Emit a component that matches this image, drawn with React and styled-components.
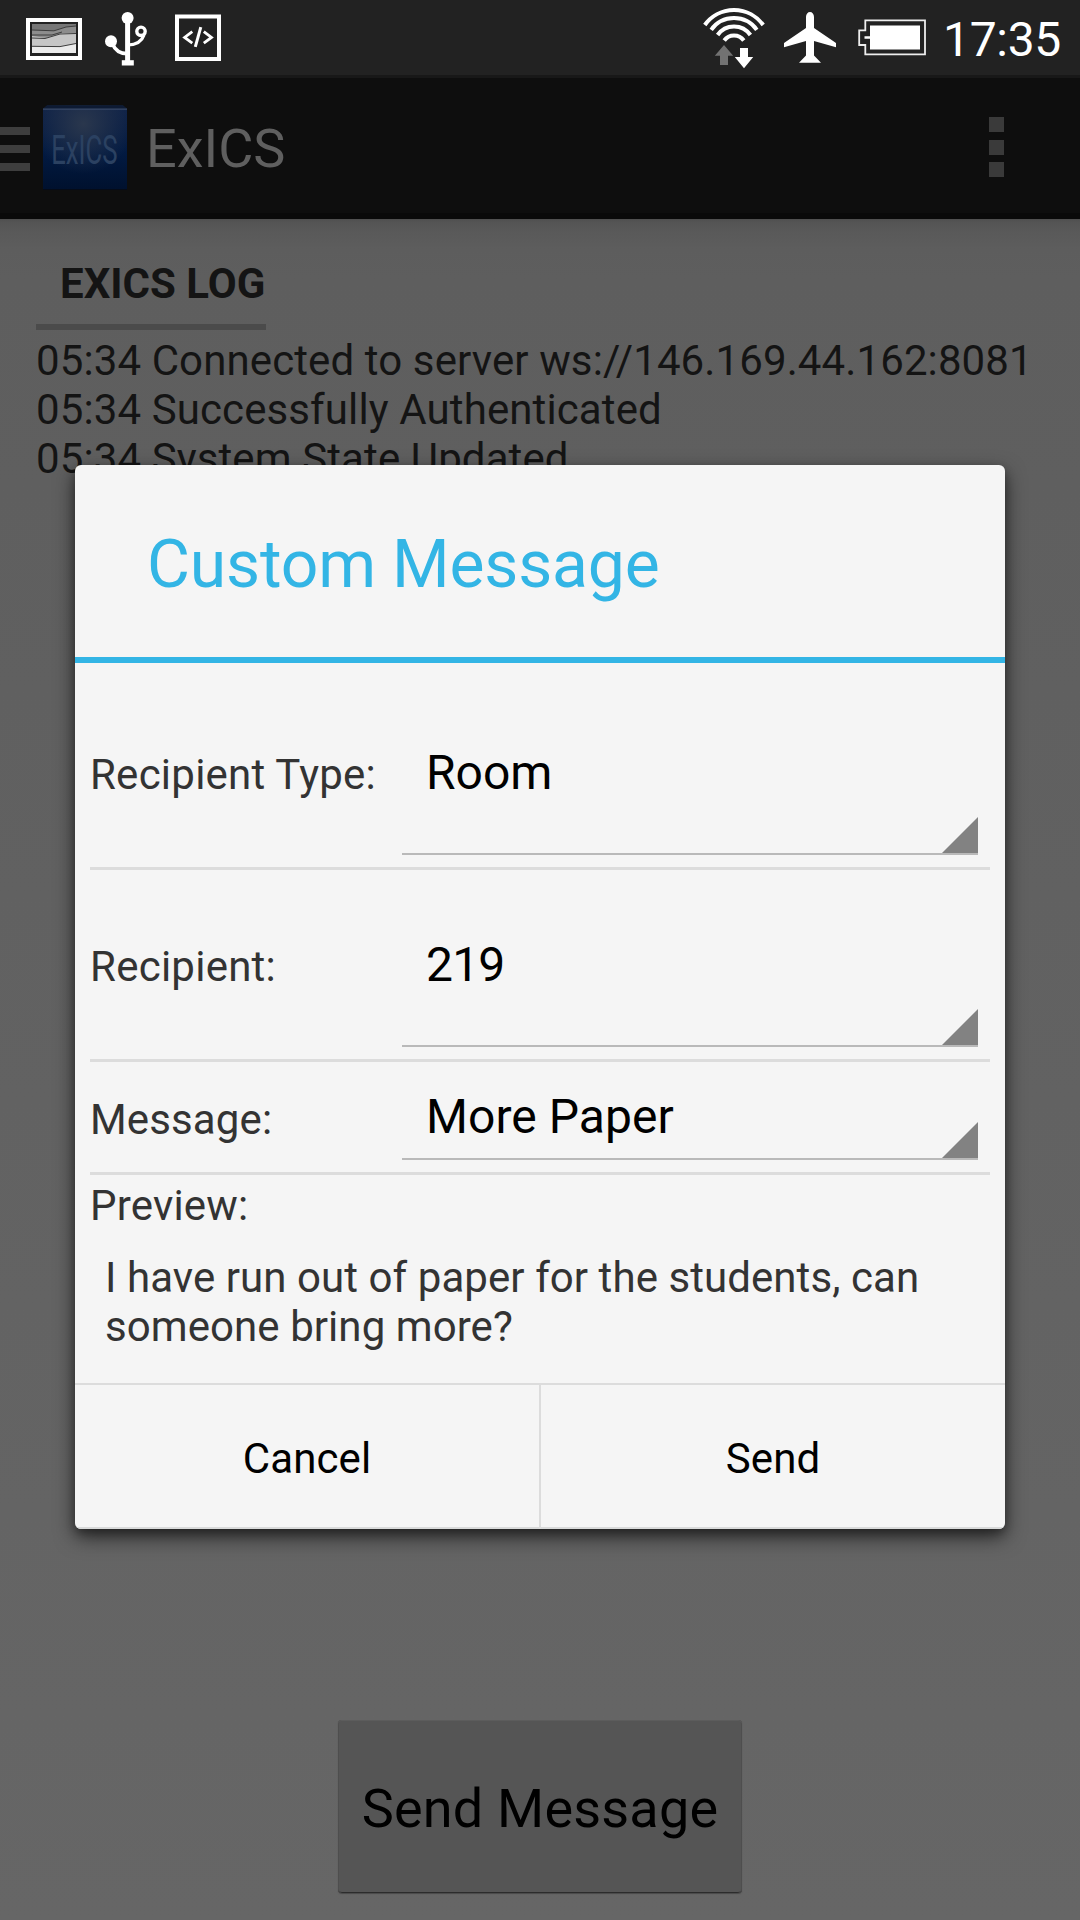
import React from "react";
import styled, { createGlobalStyle } from "styled-components";

const GlobalStyle = createGlobalStyle`
  * { box-sizing: border-box; }
  body { margin: 0; background: #636363; }
  button { border: 0; padding: 0; margin: 0; background: none; font: inherit; color: inherit; }
`;

const Screen = styled.div`
  position: relative;
  display: flex;
  flex-direction: column;
  width: 1080px;
  height: 1920px;
  overflow: hidden;
  font-family: Roboto, "Noto Sans", sans-serif;
  font-size: 42px;
  line-height: 49px;
  white-space: nowrap;
`;

/* ---------- status bar ---------- */

const StatusBar = styled.header`
  flex: none;
  display: flex;
  justify-content: space-between;
  height: 78px;
  padding: 0 18px 0 26px;
  background: #222;
  border-bottom: 3px solid #181818;
`;

const StatusGroup = styled.div`
  display: flex;
`;

const StatusIcon = styled.svg`
  display: block;
  flex: none;
  width: ${(p) => p.$width}px;
  height: 75px;
  margin-left: ${(p) => p.$before || 0}px;
`;

const Clock = styled.time`
  width: 119px;
  margin-left: 17px;
  padding-top: 12px;
  color: #fff;
  font-size: 48px;
  line-height: 56px;
  letter-spacing: -0.3px;
`;

/* ---------- action bar ---------- */

const ActionBar = styled.nav`
  flex: none;
  display: flex;
  align-items: center;
  height: 141px;
  padding-right: 76px;
  background: #0e0e0e;
  border-bottom: 6px solid #0a0a0a;
`;

const DrawerHandle = styled.div`
  display: flex;
  flex-direction: column;
  gap: 10px;
  width: 30px;
  margin: 6px 13px 0 0;
`;

const DrawerBar = styled.i`
  height: 8px;
  background: #3e3e3e;
`;

const AppLogo = styled.svg`
  display: block;
  width: 84px;
  height: 86px;
  margin-top: 5px;
`;

const AppTitle = styled.h1`
  flex: 1;
  margin: 7px 0 0 19px;
  color: #5f5f5f;
  font-size: 54px;
  font-weight: 400;
  line-height: 64px;
`;

const Overflow = styled.div`
  display: flex;
  flex-direction: column;
  gap: 7.5px;
  margin-top: 3px;
`;

const OverflowDot = styled.i`
  width: 15px;
  height: 15px;
  background: #3a3a3a;
`;

/* ---------- log page ---------- */

const Page = styled.main`
  flex: 1;
  display: flex;
  flex-direction: column;
  padding: 0 36px 27px;
  color: #141414;
  background: linear-gradient(#4f4f4f 0, #545454 3px, #595959 12px, #5d5d5d 30px, #5e5e5e 60px, #666 100%);
`;

const LogHeading = styled.h2`
  align-self: flex-start;
  width: 230px;
  height: 111px;
  margin: 0 0 6px;
  padding: 40px 0 0 24px;
  border-bottom: 6px solid #4b4b4b;
  font-size: 42px;
  font-weight: 700;
  line-height: 49px;
`;

const LogLine = styled.div`
  letter-spacing: 0.11px;
`;

const SendMessageButton = styled.button`
  align-self: center;
  width: 404px;
  height: 173px;
  margin-top: auto;
  padding-top: 3px;
  color: #000;
  background: #555;
  border-radius: 4px;
  box-shadow: inset 0 1px 0 #5c5c5c, inset 1px 0 0 #4e4e4e, inset -1px 0 0 #4e4e4e,
    inset 0 -1px 0 #2c2c2c, 0 1px 1px #4a4a4a;
  font-size: 54px;
  line-height: 63px;
  letter-spacing: 0.19px;
`;

/* ---------- dialog ---------- */

const DialogLayer = styled.div`
  position: absolute;
  inset: 0;
  display: flex;
  align-items: flex-start;
  justify-content: center;
  padding-top: 465px;
`;

const Dialog = styled.section`
  display: flex;
  flex-direction: column;
  width: 930px;
  height: 1064px;
  overflow: hidden;
  color: #333;
  background: #f5f5f5;
  border-radius: 6px;
  box-shadow: 0 8px 20px rgba(0, 0, 0, 0.62), 0 4px 8px rgba(0, 0, 0, 0.25);
`;

const DialogTitle = styled.h2`
  flex: none;
  height: 198px;
  margin: 0;
  padding: 61px 0 0 72px;
  border-bottom: 6px solid #33b5e5;
  color: #33b5e5;
  font-size: 66px;
  font-weight: 400;
  line-height: 77px;
  letter-spacing: -0.17px;
`;

const Form = styled.div`
  flex: 1;
  padding: 15px 15px 0;
`;

const Row = styled.div`
  display: grid;
  grid-template-columns: 312px 576px;
  height: ${(p) => (p.$compact ? 113 : 192)}px;
  border-bottom: 3px solid #dcdcdc;
`;

const Label = styled.label`
  align-self: center;
  padding-top: 4px;
  letter-spacing: ${(p) => p.$track}px;
`;

const Spinner = styled.div`
  display: flex;
  align-items: center;
  justify-content: space-between;
  margin-bottom: 12px;
  padding: 14px 0 0 24px;
  border-bottom: 2px solid #b9b9b9;
  color: #000;
  font-size: 48px;
  line-height: 56px;
  letter-spacing: ${(p) => p.$track || 0}px;
`;

const SpinnerCorner = styled.i`
  align-self: flex-end;
  width: 36px;
  height: 36px;
  background: #828282;
  clip-path: polygon(100% 0, 100% 100%, 0 100%);
`;

const PreviewLabel = styled.div`
  padding-top: 6px;
  letter-spacing: 0.18px;
`;

const PreviewText = styled.p`
  margin: 23px 0 0;
  padding-left: 15px;
  white-space: normal;
  letter-spacing: 0.07px;
`;

const DialogButtons = styled.footer`
  flex: none;
  display: grid;
  grid-template-columns: 466px 464px;
  height: 146px;
  border-top: 2px solid #dcdcdc;
  box-shadow: inset 0 -2px 0 #d9dada;
`;

const DialogButton = styled.button`
  padding-top: 2px;
  color: #000;
  letter-spacing: 0.1px;
  border-right: ${(p) => (p.$divided ? "2px solid #dcdcdc" : "0")};
`;

/* ---------- icons ---------- */

const PictureIcon = () => (
  <StatusIcon $width={56} viewBox="26 0 56 75">
    <rect x="28" y="20" width="52" height="38" fill="none" stroke="#fff" strokeWidth="4" />
    <rect x="32" y="24" width="44" height="29" fill="#777" />
    <path d="M32 30L54 30.5 66 27 76 26V53H32z" fill="#8d8d8d" />
    <path d="M32 36L46 38 62 33 76 33V53H32z" fill="#c6c6c6" />
    <path d="M32 46.5L60 46.5 76 43.5V53H32z" fill="#ebebeb" />
    <path d="M32 30L54 30.8 66 27 76 26M32 35L52 35 62 32M32 38L45 38.5 60 34 76 33.5M32 46.3L60 46.6 76 43.5" fill="none" stroke="#3d3d3d" strokeWidth="1" />
  </StatusIcon>
);

const UsbIcon = () => (
  <StatusIcon $width={42} $before={23} viewBox="105 0 42 75" fill="none" stroke="#fff">
    <circle cx="127.6" cy="18" r="6" fill="#fff" stroke="none" />
    <path d="M127.6 18V62" strokeWidth="5" />
    <path d="M121.8 60.2H133.8V65.5H121.8z" fill="#fff" stroke="none" />
    <circle cx="111" cy="41.3" r="6" fill="#fff" stroke="none" />
    <path d="M112.5 44C115 50 120 53.6 127 53.6" strokeWidth="3.6" />
    <circle cx="141" cy="31.3" r="4.2" strokeWidth="3.4" />
    <path d="M144 35C142 41 137 44.6 128 45" strokeWidth="3.2" />
  </StatusIcon>
);

const DevIcon = () => (
  <StatusIcon $width={46} $before={28} viewBox="175 0 46 75" fill="none" stroke="#fff">
    <path d="M177 16.5H219V59H177z" strokeWidth="4" />
    <path d="M192.3 31.6L184.6 37.4 192.3 43.2M203.8 31.6L211.5 37.4 203.8 43.2" strokeWidth="2.8" />
    <path d="M200.8 27.2L195.3 46.8" strokeWidth="3" />
  </StatusIcon>
);

const WifiIcon = () => (
  <StatusIcon $width={62} viewBox="703 0 62 75">
    <g fill="none" stroke="#fff" strokeWidth="4">
      <path d="M704.8 25A36 36 0 0 1 763.2 25" />
      <path d="M711.2 29.8A28 28 0 0 1 756.8 29.8" />
      <path d="M717.6 35A20 20 0 0 1 750.4 35" />
      <path d="M724.2 40.5A12 12 0 0 1 743.8 40.5" />
    </g>
    <path d="M724 45L733.2 55.7H728V65H720V55.7H714.8z" fill="#727272" />
    <path d="M744 68.3L753.2 57H748V48H740V57H734.8z" fill="#fff" />
  </StatusIcon>
);

const PlaneIcon = () => (
  <StatusIcon $width={52} $before={19} viewBox="784 0 52 75">
    <path d="M806 28V17C806 14 807.8 12 810 12S814 14 814 17V28L836 43V47.2L814 41V55.5L821 62.8H799L806 55.5V41L784 47.2V43z" fill="#fff" />
  </StatusIcon>
);

const BatteryIcon = () => (
  <StatusIcon $width={68} $before={22} viewBox="858 0 68 75">
    <path d="M865.3 20.4H925V54.4H865.3V45H859.2V30.4H865.3z" fill="none" stroke="#eee" strokeWidth="1.8" />
    <path d="M870 25.5H920V49.5H870V38.8H864.5V36.2H870z" fill="#fff" />
  </StatusIcon>
);

const LogoIcon = () => (
  <AppLogo viewBox="0 0 84 86">
    <defs>
      <linearGradient id="logoBase" x1="0" y1="0" x2="0" y2="1">
        <stop offset="0" stopColor="#0f2248" />
        <stop offset="0.55" stopColor="#021a42" />
        <stop offset="1" stopColor="#00112e" />
      </linearGradient>
      <radialGradient id="logoGlow" cx="0.48" cy="0.22" r="0.6">
        <stop offset="0" stopColor="#2a374d" />
        <stop offset="1" stopColor="#2a374d" stopOpacity="0" />
      </radialGradient>
    </defs>
    <path d="M0 5L4 1H80L84 5V85H0z" fill="#050b18" />
    <path d="M0 4L4 0.5H80L84 4V84H0z" fill="url(#logoBase)" />
    <path d="M0 4L4 0.5H80L84 4V84H0z" fill="url(#logoGlow)" />
    <path d="M0 4L4 0.5H80L84 4z" fill="#0d1a33" />
    <path d="M0 4.2H84" stroke="#3a4a68" strokeWidth="1.2" />
    <text
      transform="translate(8.2 59) scale(0.62 1)"
      fill="#2b4161"
      fontFamily="Roboto, sans-serif"
      fontWeight="400"
      fontSize="41.5"
    >
      ExICS
    </text>
  </AppLogo>
);

/* ---------- data ---------- */

const logEntries = [
  "05:34 Connected to server ws://146.169.44.162:8081",
  "05:34 Successfully Authenticated",
  "05:34 System State Updated",
];

const fields = [
  { label: "Recipient Type:", labelTrack: 0.24, value: "Room", track: 0 },
  { label: "Recipient:", labelTrack: 0.25, value: "219", track: -0.8 },
  { label: "Message:", labelTrack: 0.14, value: "More Paper", track: 0.05, compact: true },
];

export default function App() {
  return (
    <Screen>
      <GlobalStyle />
      <StatusBar>
        <StatusGroup>
          <PictureIcon />
          <UsbIcon />
          <DevIcon />
        </StatusGroup>
        <StatusGroup>
          <WifiIcon />
          <PlaneIcon />
          <BatteryIcon />
          <Clock>17:35</Clock>
        </StatusGroup>
      </StatusBar>

      <ActionBar>
        <DrawerHandle>
          <DrawerBar />
          <DrawerBar />
          <DrawerBar />
        </DrawerHandle>
        <LogoIcon />
        <AppTitle>ExICS</AppTitle>
        <Overflow>
          <OverflowDot />
          <OverflowDot />
          <OverflowDot />
        </Overflow>
      </ActionBar>

      <Page>
        <LogHeading>EXICS LOG</LogHeading>
        {logEntries.map((entry) => (
          <LogLine key={entry}>{entry}</LogLine>
        ))}
        <SendMessageButton>Send Message</SendMessageButton>
      </Page>

      <DialogLayer>
        <Dialog role="dialog">
          <DialogTitle>Custom Message</DialogTitle>
          <Form>
            {fields.map((f) => (
              <Row key={f.label} $compact={f.compact}>
                <Label $track={f.labelTrack}>{f.label}</Label>
                <Spinner $track={f.track}>
                  {f.value}
                  <SpinnerCorner />
                </Spinner>
              </Row>
            ))}
            <PreviewLabel>Preview:</PreviewLabel>
            <PreviewText>I have run out of paper for the students, can someone bring more?</PreviewText>
          </Form>
          <DialogButtons>
            <DialogButton $divided>Cancel</DialogButton>
            <DialogButton>Send</DialogButton>
          </DialogButtons>
        </Dialog>
      </DialogLayer>
    </Screen>
  );
}
